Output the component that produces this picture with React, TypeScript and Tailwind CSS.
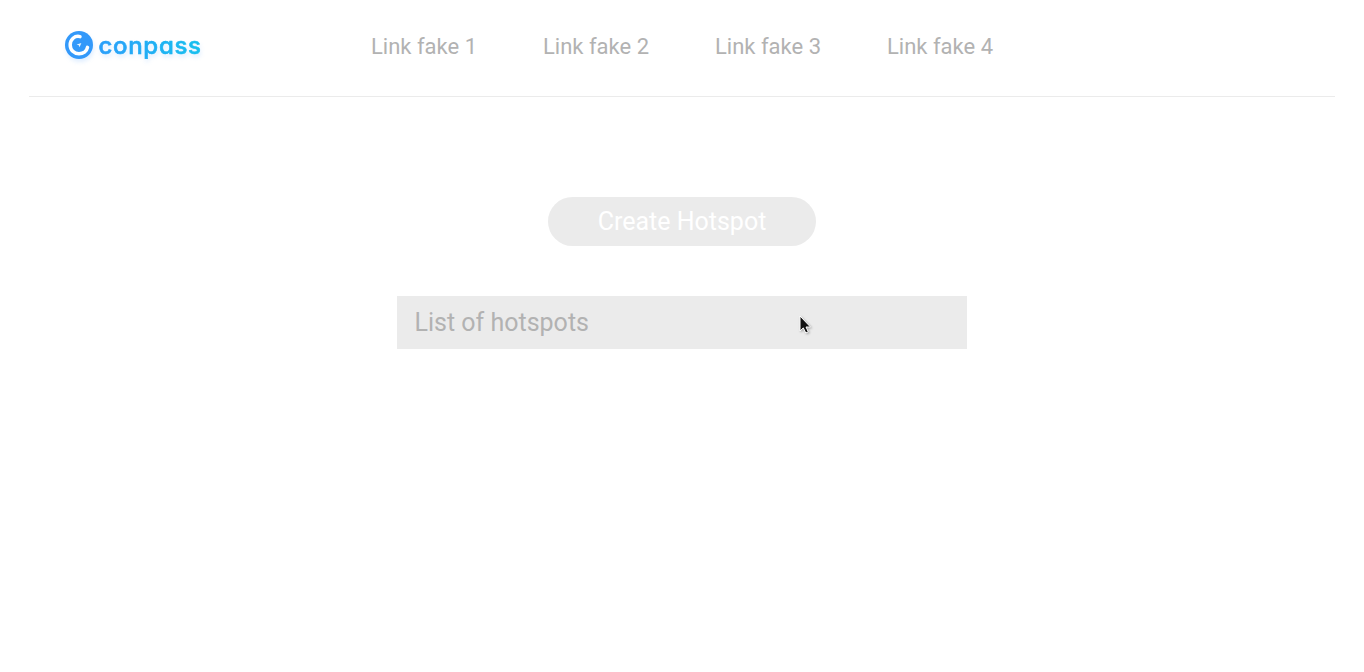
const links = ['Link fake 1', 'Link fake 2', 'Link fake 3', 'Link fake 4'];

function Logo() {
  return (
    <svg width="146" height="44" viewBox="0 0 146 44" role="img" aria-label="conpass" className="overflow-visible drop-shadow-[1px_3px_2px_rgba(50,140,255,0.15)]">
      <defs>
        <linearGradient id="brand" gradientUnits="userSpaceOnUse" x1="34" y1="0" x2="138" y2="0">
          <stop offset="0" stopColor="#2b9ffa" />
          <stop offset="1" stopColor="#15c0ee" />
        </linearGradient>
      </defs>
      <circle cx="14" cy="21" r="14" fill="#3399fa" />
      <path d="M15 12.6 C9.6 11.4 5.2 15.4 5.2 21 C5.2 26 9.1 29.7 14 29.7 C18.2 29.7 21.7 27.2 22.5 23.4" fill="none" stroke="#fff" strokeWidth="3.5" strokeLinecap="round" />
      <path d="M16.4 19.1 L11.6 20.5 L13.8 21.2 L14.5 23.3 Z" fill="#e6f3ff" />
      <text x="33.5" y="30" fontFamily="Inter, sans-serif" fontSize="24" fontWeight="500" textLength="102.5" fill="url(#brand)" stroke="url(#brand)" strokeWidth="0.6" strokeLinejoin="round" style={{ fontFeatureSettings: '"cv11"' }}>
        conpass
      </text>
    </svg>
  );
}

function Pointer() {
  return (
    <svg width="14" height="20" viewBox="0 0 14 20" className="absolute left-[401.5px] top-[19px] drop-shadow-[1px_1px_1px_rgba(0,0,0,0.3)]">
      <path d="M1 1 V16 L4.3 12.9 L6.8 18 L9.3 16.8 L7 12 H11.5 Z" fill="#111" stroke="#fff" strokeWidth="1" />
    </svg>
  );
}

export default function App() {
  return (
    <div className="min-h-screen bg-white px-[29px] font-['Roboto',sans-serif]">
      <header className="flex h-[97px] items-start border-b border-[#ebebeb] pl-9">
        <div className="mt-6 w-[306px]">
          <Logo />
        </div>
        <nav className="mt-[31px] flex text-[22px] leading-8 text-[#b2b2b2]">
          {links.map((label) => (
            <a key={label} href="#" className="w-[172px] whitespace-nowrap">
              {label}
            </a>
          ))}
        </nav>
      </header>
      <main className="flex flex-col items-center pt-[100px]">
        <button className="h-[49px] w-[268px] rounded-full bg-[#ebebeb] text-[25px] text-white">Create Hotspot</button>
        <section className="relative mt-[50px] flex h-[53px] w-[570px] items-center bg-[#ebebeb] pl-[17.5px] text-[25px] text-[#b2b2b2]">
          <h2>List of hotspots</h2>
          <Pointer />
        </section>
      </main>
    </div>
  );
}
